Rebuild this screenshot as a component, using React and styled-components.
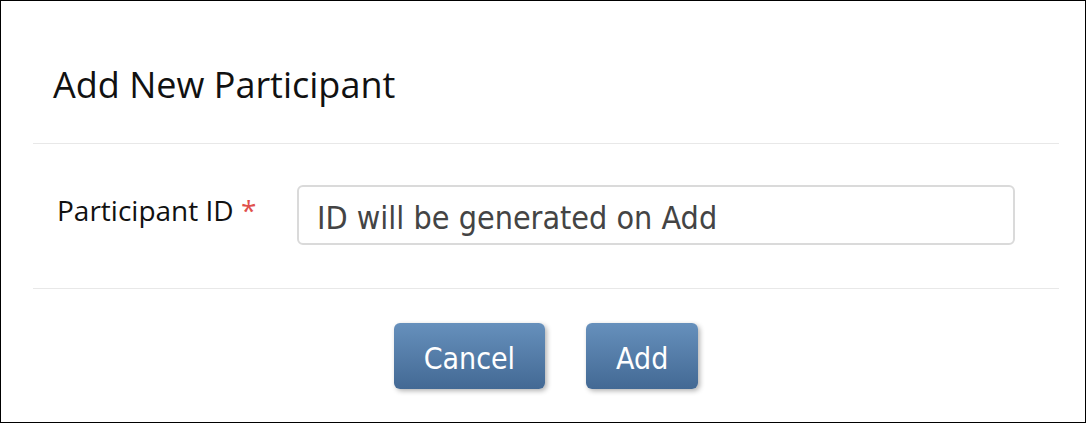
import styled, { createGlobalStyle } from "styled-components"

const GlobalStyle = createGlobalStyle`
  html, body {
    margin: 0;
    padding: 0;
    background: #fff;
  }
  * {
    box-sizing: border-box;
  }
`

const Frame = styled.div`
  width: 1086px;
  height: 423px;
  border: 1px solid #000;
  background: #fff;
  padding: 0 26px 0 32px;
  display: flex;
  flex-direction: column;
`

const Header = styled.div`
  height: 143px;
  padding: 66px 0 0 20px;
  border-bottom: 1px solid #e8e8e8;
`

const Title = styled.h2`
  margin: 0;
  font-family: "Open Sans", "Noto Sans", sans-serif;
  font-weight: 400;
  font-size: 36px;
  line-height: 36px;
  color: #111;
`

const Body = styled.div`
  height: 145px;
  padding: 41px 44px 0 24px;
  border-bottom: 1px solid #e8e8e8;
  display: flex;
  align-items: flex-start;
`

const Label = styled.label`
  width: 240px;
  flex-shrink: 0;
  padding-top: 11px;
  font-family: "Open Sans", "Noto Sans", sans-serif;
  font-size: 28px;
  line-height: 28px;
  color: #111;
`

const Required = styled.span`
  color: #e0504c;
`

const TextInput = styled.input`
  flex: 1;
  height: 60px;
  border: 2px solid #dadada;
  border-radius: 6px;
  padding: 6px 0 0 18px;
  font-family: "DejaVu Sans Condensed", "DejaVu Sans", sans-serif;
  font-size: 32px;
  color: #444;
  background: #fff;
  outline: none;
`

const Footer = styled.div`
  flex: 1;
  padding-top: 34px;
  display: flex;
  justify-content: center;
  align-items: flex-start;
  gap: 41px;
`

const Button = styled.button`
  height: 66px;
  padding: 4px 30px 0;
  border: none;
  border-radius: 6px;
  background: linear-gradient(to bottom, #6690bc, #436994);
  box-shadow: 2px 2px 5px rgba(0, 0, 0, 0.3);
  color: #fff;
  font-family: "DejaVu Sans Condensed", "DejaVu Sans", sans-serif;
  font-size: 30px;
  cursor: pointer;
`

const App = () => {
  return (
    <>
      <GlobalStyle />
      <Frame>
        <Header>
          <Title>Add New Participant</Title>
        </Header>
        <Body>
          <Label htmlFor="participant-id">
            Participant ID <Required>*</Required>
          </Label>
          <TextInput
            id="participant-id"
            readOnly
            value="ID will be generated on Add"
          />
        </Body>
        <Footer>
          <Button>Cancel</Button>
          <Button>Add</Button>
        </Footer>
      </Frame>
    </>
  )
}

export default App
